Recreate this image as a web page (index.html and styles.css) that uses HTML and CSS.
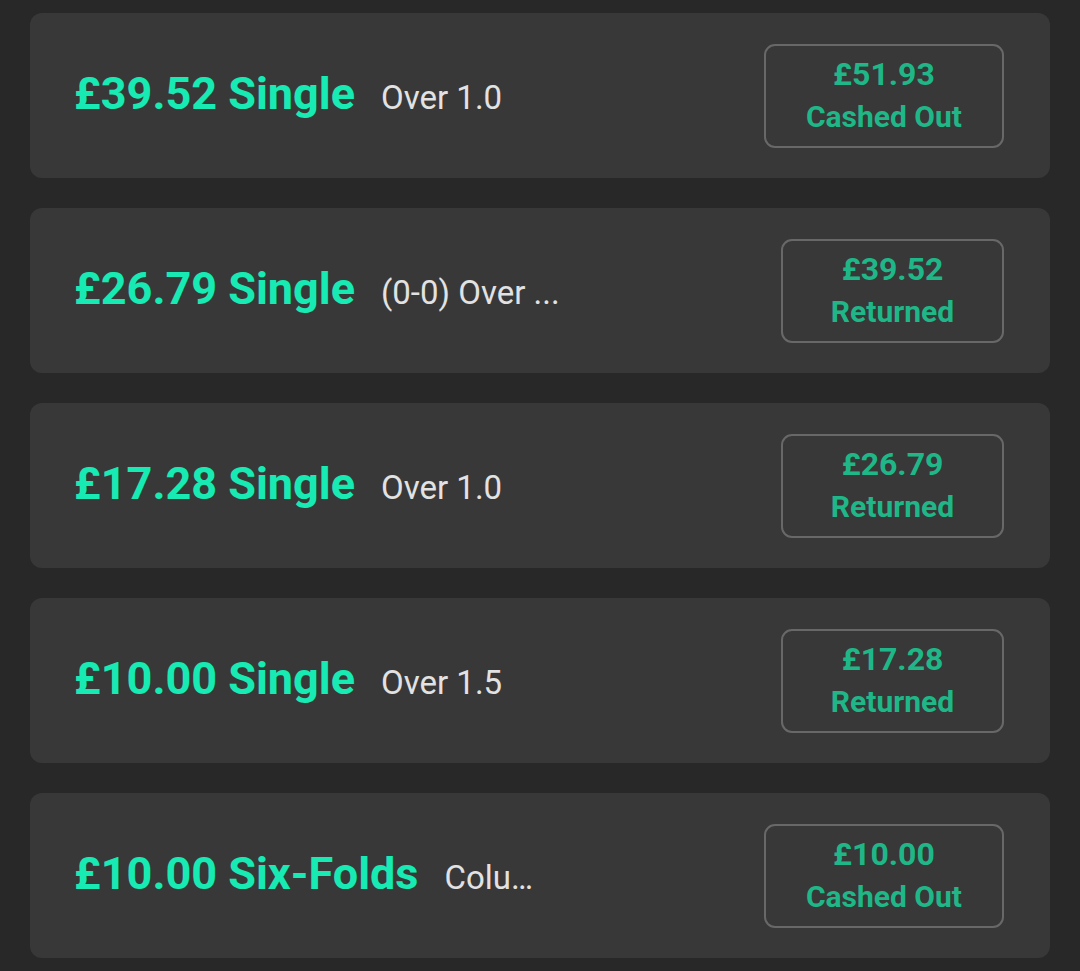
FILE: index.html
```html
<!DOCTYPE html>
<html lang="en">
<head>
<meta charset="utf-8">
<title>Settled bets</title>
<link rel="stylesheet" href="styles.css">
</head>
<body>
<main class="list">
  <section class="bet">
    <div class="info"><span class="title">£39.52 Single</span><span class="sub">Over 1.0</span></div>
    <div class="result"><span class="amount">£51.93</span><span class="status">Cashed Out</span></div>
  </section>
  <section class="bet">
    <div class="info"><span class="title">£26.79 Single</span><span class="sub">(0-0) Over ...</span></div>
    <div class="result"><span class="amount">£39.52</span><span class="status">Returned</span></div>
  </section>
  <section class="bet">
    <div class="info"><span class="title">£17.28 Single</span><span class="sub">Over 1.0</span></div>
    <div class="result"><span class="amount">£26.79</span><span class="status">Returned</span></div>
  </section>
  <section class="bet">
    <div class="info"><span class="title">£10.00 Single</span><span class="sub">Over 1.5</span></div>
    <div class="result"><span class="amount">£17.28</span><span class="status">Returned</span></div>
  </section>
  <section class="bet">
    <div class="info"><span class="title">£10.00 Six-Folds</span><span class="sub">Colu…</span></div>
    <div class="result"><span class="amount">£10.00</span><span class="status">Cashed Out</span></div>
  </section>
</main>
</body>
</html>
```
FILE: styles.css
```css
html, body {
  margin: 0;
  padding: 0;
  background: #282828;
  font-family: Roboto, "Liberation Sans", sans-serif;
}

.list {
  display: flex;
  flex-direction: column;
  gap: 30px;
  padding: 13px 30px 0 30px;
}

.bet {
  height: 165px;
  box-sizing: border-box;
  background: #383838;
  border-radius: 12px;
  display: flex;
  align-items: center;
  justify-content: space-between;
  padding: 0 46px 0 44px;
}

.info {
  display: flex;
  align-items: baseline;
  gap: 26px;
  padding-bottom: 5px;
}

.title {
  color: #17eab2;
  font-weight: 700;
  font-size: 45px;
}

.sub {
  color: #e2e2e2;
  font-size: 33px;
  font-weight: 400;
}

.result {
  box-sizing: border-box;
  min-width: 223px;
  height: 104px;
  border: 2px solid #686868;
  border-radius: 11px;
  padding: 0 40px;
  display: flex;
  flex-direction: column;
  align-items: center;
  justify-content: center;
  color: #1fb787;
  font-weight: 700;
  gap: 5px;
}

.amount {
  font-size: 32px;
  line-height: 38px;
}

.status {
  font-size: 30px;
  line-height: 38px;
}
```
